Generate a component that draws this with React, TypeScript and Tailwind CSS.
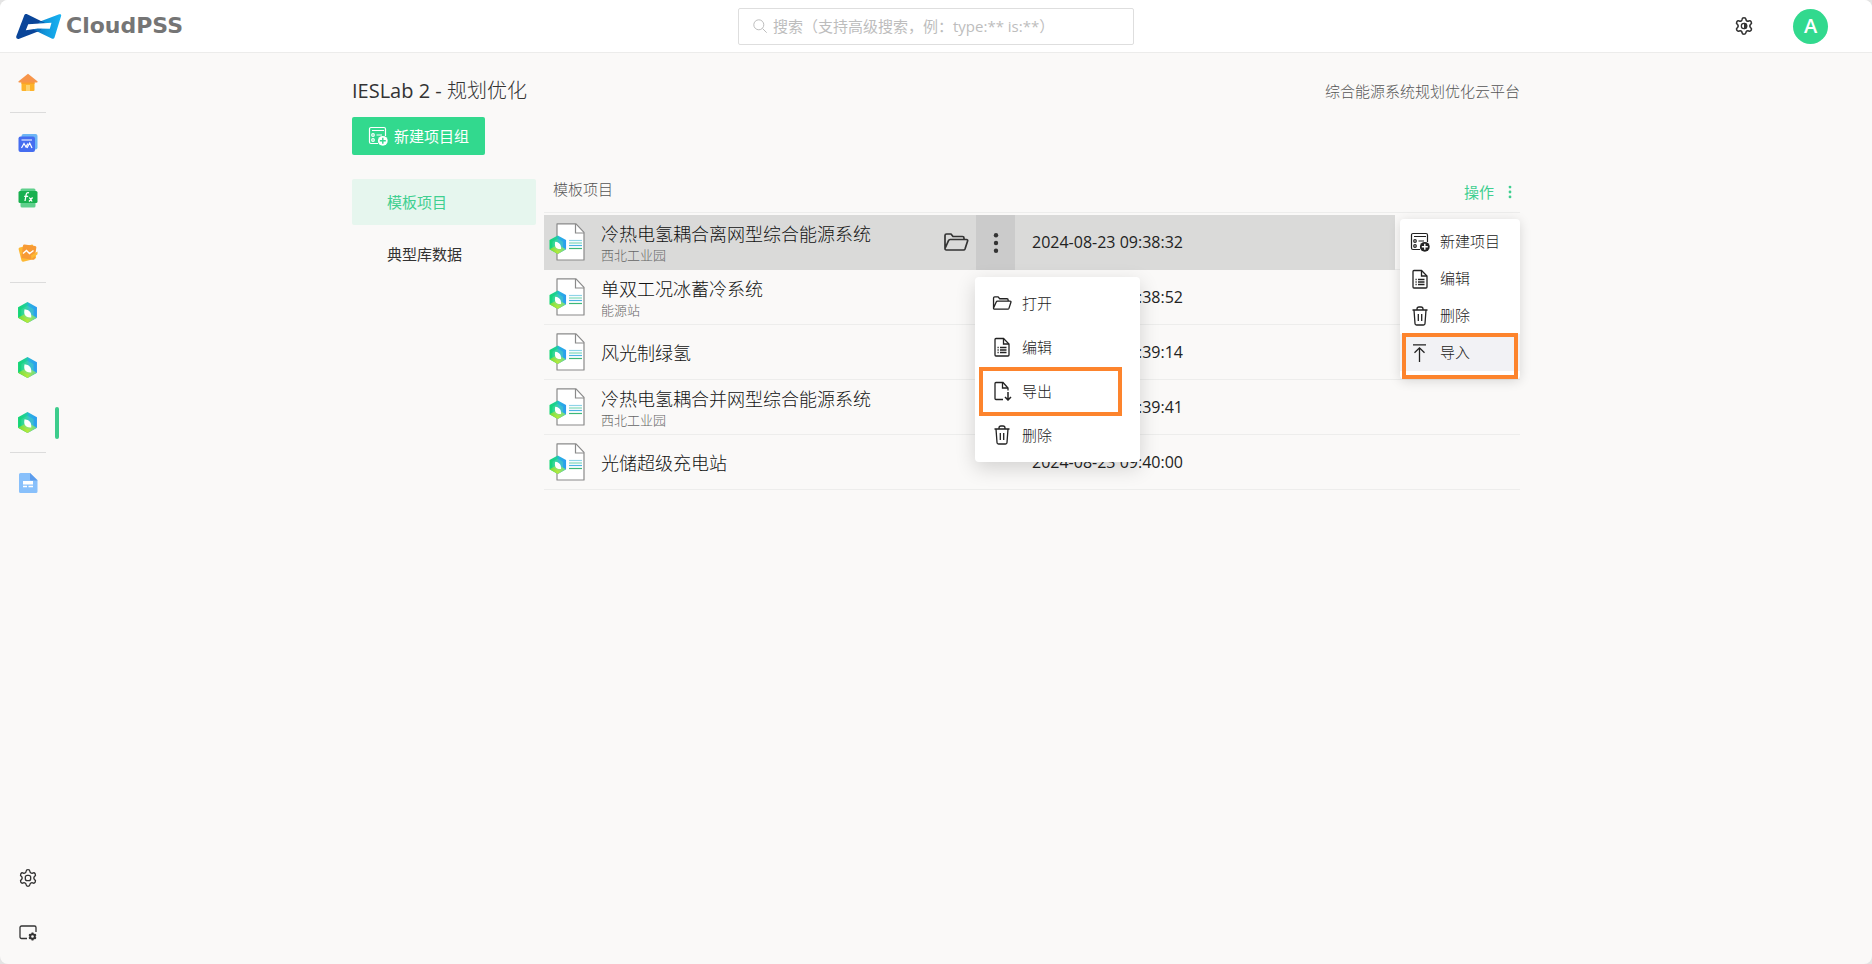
import type { ReactNode } from 'react';

const GEAR =
  'M9.671 4.136a2.34 2.34 0 0 1 4.659 0 2.34 2.34 0 0 0 3.319 1.915 2.34 2.34 0 0 1 2.33 4.033 2.34 2.34 0 0 0 0 3.831 2.34 2.34 0 0 1-2.33 4.033 2.34 2.34 0 0 0-3.319 1.915 2.34 2.34 0 0 1-4.659 0 2.34 2.34 0 0 0-3.32-1.915 2.34 2.34 0 0 1-2.33-4.033 2.34 2.34 0 0 0 0-3.831A2.34 2.34 0 0 1 6.35 6.051a2.34 2.34 0 0 0 3.319-1.915';

function GearIcon() {
  return (
    <svg className="size-5" viewBox="0 0 24 24" fill="none" stroke="currentColor" strokeWidth="1.6">
      <path d={GEAR} />
      <rect x="8.8" y="8.8" width="6.4" height="6.4" rx="2.4" />
    </svg>
  );
}

function ThemeGearIcon() {
  return (
    <svg className="size-5" viewBox="0 0 24 24" fill="none" stroke="currentColor" strokeWidth="1.9">
      <path d={GEAR} />
      <circle cx="12" cy="12" r="3.2" strokeWidth="1.5" />
      <path d="M12 8a4 4 0 0 1 0 8Z" fill="currentColor" stroke="none" />
    </svg>
  );
}

function WindowGearIcon() {
  return (
    <svg className="size-5" viewBox="0 0 20 20" fill="none" stroke="currentColor" strokeWidth="1.3">
      <path d="M9 15.5H3.5A1.5 1.5 0 0 1 2 14V4.5A1.5 1.5 0 0 1 3.500 3h13A1.500 1.500 0 0 1 18 4.500V9" />
      <circle cx="14.500" cy="13.500" r="2.300" strokeWidth="1.900" />
      <path d="M14.500 9.500v1.800M14.500 15.700v1.800M11 11.500l1.600.9M16.400 14.600l1.600.9M11 15.500l1.600-.9M16.400 12.400l1.600-.9" strokeWidth="1.900" />
    </svg>
  );
}

function HomeIcon() {
  return (
    <svg className="size-5" viewBox="0 0 20 20">
      <path d="M3.500 8h13v9a1 1 0 0 1-1 1h-11a1 1 0 0 1-1-1Z" fill="#fdb32b" />
      <path d="M3.500 8h13v3h-13Z" fill="#fba12a" />
      <path d="M8 12h4v6H8Z" fill="#fdd16e" />
      <path d="M10 .8.600 8.300c-.5.500-.2 1.200.4 1.200h18c.6 0 .9-.7.4-1.200Z" fill="#f7954a" />
    </svg>
  );
}

function ChartIcon() {
  return (
    <svg className="size-5" viewBox="0 0 20 20">
      <rect x="3.500" y="1" width="16" height="15.500" rx="2" fill="#6cb5f5" />
      <rect x=".5" y="3.500" width="16.500" height="15.500" rx="2" fill="#456df0" />
      <path d="M3.500 7h10.500" stroke="#fff" strokeWidth="1.200" />
      <path d="m3.500 15 2.500-4.500 2 3.500 1.800-3.500M9 15l2.700-5 2.300 5" fill="none" stroke="#fff" strokeWidth="1.200" />
    </svg>
  );
}

function FunctionIcon() {
  return (
    <svg className="size-5" viewBox="0 0 20 20">
      <rect x="2.500" y=".5" width="15" height="6" rx="1.500" fill="#5fd08c" />
      <rect x="2.500" y="13" width="15" height="6.500" rx="1.500" fill="#5fd08c" />
      <rect x=".5" y="3" width="19" height="12" rx="1.500" fill="#18b04f" />
      <path
        d="M11 4.800c-1.800-.7-2.600.4-2.900 2L7 13M6.200 8.300h4M11.300 9.500l2.800 4M14.600 9.500l-3.600 4"
        fill="none"
        stroke="#fff"
        strokeWidth="1.300"
      />
    </svg>
  );
}

function StatsIcon() {
  return (
    <svg className="size-5" viewBox="0 0 20 20">
      <rect x="1.800" y="3" width="15" height="14.500" rx="1.500" fill="#fdb833" transform="rotate(-14 9 10)" />
      <rect x="4" y="2" width="13.500" height="14" rx="1.500" fill="#f79a35" transform="rotate(8 10 10)" />
      <path d="M13 12.500 19.500 8.500v2.800L13.500 16Z" fill="#fdb833" />
      <path d="m5 10.500 3.500-3 3 3 4-3" fill="none" stroke="#fff" strokeWidth="1.500" />
    </svg>
  );
}

function HexShape() {
  return (
    <g>
      <path d="M9 0 18 5v10l-9 5-9-5V5Z" fill="url(#hexSide)" />
      <path d="m0 15 9-5 9 5-9 5Z" fill="url(#hexBase)" />
      <path d="m9 3.500 5.800 3.200v6.600L9 16.500l-5.800-3.200V6.700Z" fill="#5fe0a8" fillOpacity=".35" />
      <path d="M6.200 6.800c2.700.2 5.600 1.800 6.100 4.300.3 1.300.3 2.400.3 3.600-2.700.3-5.400-.6-6.300-2.800-.6-1.600-.5-3.300-.1-5.100Z" fill="#fff" />
    </g>
  );
}

function HexGradients() {
  return (
    <svg className="absolute size-0" aria-hidden="true">
      <defs>
        <linearGradient id="hexSide" x1="0" y1="0" x2="1" y2="0">
          <stop offset="0" stopColor="#12d672" />
          <stop offset=".42" stopColor="#20cf9c" />
          <stop offset=".6" stopColor="#2ab2e0" />
          <stop offset="1" stopColor="#2a9cf0" />
        </linearGradient>
        <linearGradient id="hexBase" x1="0" y1="0" x2="1" y2="0">
          <stop offset="0" stopColor="#6fdc3c" />
          <stop offset=".5" stopColor="#b4e83c" />
          <stop offset="1" stopColor="#5cd8a0" />
        </linearGradient>
      </defs>
    </svg>
  );
}

function HexIcon() {
  return (
    <svg className="h-[21px] w-[19px]" viewBox="0 0 18 20">
      <HexShape />
    </svg>
  );
}

function DocIcon() {
  return (
    <svg className="size-5" viewBox="0 0 20 20">
      <path d="M2.500 0H12l7.500 7v11.500a1.500 1.500 0 0 1-1.500 1.500H2.500A1.500 1.500 0 0 1 1 18.500v-17A1.500 1.500 0 0 1 2.500 0Z" fill="#88c0fb" />
      <path d="M12 0l7.500 7.500H13A1 1 0 0 1 12 6.500Z" fill="#5c9cec" />
      <path d="M5 8h10v3.500H5ZM5 12.700h4v1.500H5ZM10.500 12.700H15v1.500h-4.500Z" fill="#fff" />
    </svg>
  );
}

function FileIcon() {
  return (
    <svg className="h-[38px] w-9 shrink-0" viewBox="0 0 36 38" fill="none">
      <path d="M8 .9h19l8 8.500V37H8Z" fill="#fff" stroke="#8a8a8a" strokeWidth="1.200" strokeLinejoin="round" />
      <path d="M26.500 1v9H35" stroke="#8a8a8a" strokeWidth="1.200" />
      <path d="M20 17.500h13" stroke="#8fd3e8" strokeWidth="1.200" />
      <path d="M20 20h13" stroke="#7dd8b8" strokeWidth="1.200" />
      <path d="M20 22.500h13" stroke="#4fb4e6" strokeWidth="1.200" />
      <path d="M20 25.500h13" stroke="#3cb878" strokeWidth="1.200" />
      <g transform="translate(.5 12.500) scale(.92)">
        <HexShape />
      </g>
    </svg>
  );
}

function ListAddIcon({ hole }: { hole: string }) {
  return (
    <svg className="size-5" viewBox="0 0 20 20" fill="none" stroke="currentColor" strokeWidth="1.200">
      <path d="M10 17.500H3A1.500 1.500 0 0 1 1.500 16V3A1.500 1.500 0 0 1 3 1.500h13A1.500 1.500 0 0 1 17.500 3v7M4 4.500h12M8.500 9H14" />
      <circle cx="5" cy="9" r="1.300" />
      <circle cx="5" cy="14" r="1.300" />
      <circle cx="14.800" cy="14.800" r="4.900" fill="currentColor" stroke="none" />
      <path d="M14.800 11.800v6M11.800 14.800h6" className={hole} strokeWidth="1.400" />
    </svg>
  );
}

function FolderIcon({ size }: { size: string }) {
  return (
    <svg className={size} viewBox="0 0 26 20" fill="none" stroke="currentColor" strokeWidth="1.700" strokeLinejoin="round">
      <path d="M2 16.500V3.500A1.500 1.500 0 0 1 3.500 2H8l2 2.500h9.500A1.500 1.500 0 0 1 21 6v1.500M2 16.500 5.500 8.600A1.800 1.800 0 0 1 7.200 7.500h16.300c.9 0 1.400.7 1.100 1.500L22 17a1.500 1.500 0 0 1-1.400 1H3.300A1.300 1.300 0 0 1 2 16.500Z" />
    </svg>
  );
}

function EditIcon() {
  return (
    <svg className="size-5" viewBox="0 0 20 20" fill="none" stroke="currentColor" strokeWidth="1.300">
      <path d="M3 2.500A1 1 0 0 1 4 1.500h7.500L17 7v11a1 1 0 0 1-1 1H4a1 1 0 0 1-1-1Z" />
      <path d="M11.500 1.500V7H17M8 10.500h6.500M8 13h6.500M8 15.500h6.500M5.500 10.500h1.200M5.500 13h1.200M5.500 15.500h1.200" />
    </svg>
  );
}

function ExportIcon() {
  return (
    <svg className="size-5" viewBox="0 0 20 20" fill="none" stroke="currentColor" strokeWidth="1.300">
      <path d="M11 18.500H4a1 1 0 0 1-1-1v-15a1 1 0 0 1 1-1h7L16 7v2.500" />
      <path d="M10.500 1.500V7H16" />
      <path d="M16 11v8M13 16l3 3 3-3" strokeWidth="1.500" />
    </svg>
  );
}

function TrashIcon() {
  return (
    <svg className="size-5" viewBox="0 0 20 20" fill="none" stroke="currentColor" strokeWidth="1.300">
      <path d="M2.500 4h15M7 4V3a2 2 0 0 1 2-2h2a2 2 0 0 1 2 2v1M4 4l1 13.500A1.500 1.500 0 0 0 6.500 19h7a1.500 1.500 0 0 0 1.500-1.500L16 4M8.300 8v7M11.700 8v7" />
    </svg>
  );
}

function ImportIcon() {
  return (
    <svg className="size-5" viewBox="0 0 20 20" fill="none" stroke="currentColor" strokeWidth="1.300">
      <path d="M3 1.800h13M9.500 19V4.800M4.500 9.800l5-5 5 5" />
    </svg>
  );
}

function Dots({ className }: { className: string }) {
  return (
    <svg className={className} viewBox="0 0 6 22" fill="currentColor">
      <circle cx="3" cy="3.200" r="2.200" />
      <circle cx="3" cy="11" r="2.200" />
      <circle cx="3" cy="18.800" r="2.200" />
    </svg>
  );
}

function Logo() {
  return (
    <a href="#" className="flex items-center gap-1" aria-label="CloudPSS">
      <svg className="h-[25px] w-[46px]" viewBox="0 0 46 25">
        <defs>
          <linearGradient id="logoLight" x1="0" y1="0" x2="1" y2="0">
            <stop offset="0" stopColor="#0b63b4" />
            <stop offset=".5" stopColor="#1298dc" />
            <stop offset="1" stopColor="#17b4f4" />
          </linearGradient>
        </defs>
        <path d="M43.200.3c1.500-.4 2.300.4 1.900 1.700l-6.500 21.200c-.5 1.400-1.600 1.900-2.900 1.400L15 14.500 24 7.600Z" fill="url(#logoLight)" />
        <path d="M11.200.3 31 10l-9 7.500L3.300 24.700C1.300 25.400-.3 24 .3 22.200L8.200 1.600C8.800.200 10-.200 11.200.3Z" fill="#0a4599" />
        <path d="M24 7.600 31 10l-9 7.500-4.500-1.800Z" fill="#0c6fbe" />
        <path d="m12.200 10.200 23.300-1.400-1.700 6-12-.3-12 1.700Z" fill="#fff" />
      </svg>
      <span className="font-['DejaVu_Sans'] text-[22px] leading-7 font-bold text-[#757575]">CloudPSS</span>
    </a>
  );
}

function NavItem({ label, active, children }: { label: string; active?: boolean; children: ReactNode }) {
  return (
    <a href="#" aria-label={label} className="flex h-[55px] items-center">
      <span className="flex w-[55px] justify-center">{children}</span>
      {active && <span className="h-8 w-1 rounded-full bg-[#3ccc8c]" />}
    </a>
  );
}

function Divider() {
  return <div className="mx-2.5 my-0.5 h-px w-9 bg-[#dcdcdc]" />;
}

const projects = [
  { name: '冷热电氢耦合离网型综合能源系统', note: '西北工业园', date: '2024-08-23 09:38:32' },
  { name: '单双工况冰蓄冷系统', note: '能源站', date: '2024-08-23 09:38:52' },
  { name: '风光制绿氢', note: '', date: '2024-08-23 09:39:14' },
  { name: '冷热电氢耦合并网型综合能源系统', note: '西北工业园', date: '2024-08-23 09:39:41' },
  { name: '光储超级充电站', note: '', date: '2024-08-23 09:40:00' },
];

function RowMenu() {
  const item = 'flex h-11 w-full items-center gap-2.5 pl-[17px] text-left';
  return (
    <div className="absolute top-[62px] left-full z-10 -ml-10 w-[165px] rounded-sm bg-white pt-1 pb-[5px] text-[15px] font-light text-[#222] shadow-[0_6px_20px_rgba(0,0,0,0.16)]">
      <button className={item}>
        <FolderIcon size="h-4 w-5" />
        打开
      </button>
      <button className={item}>
        <EditIcon />
        编辑
      </button>
      <button className={`${item} relative`}>
        <span className="absolute -top-0.5 left-1 h-[49px] w-[143px] border-4 border-[#fd842d]" />
        <ExportIcon />
        导出
      </button>
      <button className={item}>
        <TrashIcon />
        删除
      </button>
    </div>
  );
}

function GroupMenu() {
  const item = 'flex h-[37px] w-full items-center gap-2.5 pl-2.5 text-left';
  return (
    <div className="absolute top-10 right-0 z-10 w-[120px] rounded-sm bg-white pt-1 text-[15px] font-light text-[#222] shadow-[0_2px_12px_rgba(0,0,0,0.14)]">
      <button className={item}>
        <ListAddIcon hole="stroke-white" />
        新建项目
      </button>
      <button className={item}>
        <EditIcon />
        编辑
      </button>
      <button className={item}>
        <TrashIcon />
        删除
      </button>
      <div className="relative pb-2">
        <button className={`${item} bg-[#f2f2f5]`}>
          <ImportIcon />
          导入
        </button>
        <span className="absolute inset-x-0.5 -top-px bottom-0 border-4 border-[#fd842d]" />
      </div>
    </div>
  );
}

export default function App() {
  return (
    <div className="min-h-screen bg-[#e4e4e4] font-['Open_Sans','Noto_Sans_CJK_SC',sans-serif] text-[#333]">
      <HexGradients />
      <div className="flex min-h-screen flex-col overflow-hidden rounded-lg bg-[#faf9f8]">
        <header className="grid h-[53px] grid-cols-[1fr_396px_1fr] items-center border-b border-[#ececeb] bg-white pr-11 pl-4">
          <Logo />
          <label className="ml-[14px] flex h-[37px] w-[396px] items-center gap-1.5 rounded-xs border border-[#dedede] pl-3.5 text-[#bdbdbd]">
            <svg className="size-3.5" viewBox="0 0 14 14" fill="none" stroke="currentColor" strokeWidth="1">
              <circle cx="5.800" cy="5.800" r="5" />
              <path d="m9.500 9.500 4.200 4.200" />
            </svg>
            <input
              type="search"
              aria-label="搜索"
              placeholder="搜索（支持高级搜索，例：type:** is:**）"
              className="flex-1 bg-transparent text-[15px] leading-5 outline-none placeholder:text-[#bdbdbd]"
            />
          </label>
          <div className="flex items-center justify-end gap-[39px]">
            <button aria-label="主题设置">
              <ThemeGearIcon />
            </button>
            <button className="size-[35px] rounded-full bg-[#32d98e] text-xl font-semibold text-white">A</button>
          </div>
        </header>

        <div className="flex flex-1">
          <nav className="flex w-[60px] flex-col pt-0.5 pb-1">
            <NavItem label="首页"><HomeIcon /></NavItem>
            <Divider />
            <NavItem label="SimStudio"><ChartIcon /></NavItem>
            <NavItem label="FuncStudio"><FunctionIcon /></NavItem>
            <NavItem label="AppStudio"><StatsIcon /></NavItem>
            <Divider />
            <NavItem label="IESLab 仿真"><HexIcon /></NavItem>
            <NavItem label="IESLab 评估"><HexIcon /></NavItem>
            <NavItem label="IESLab 规划优化" active><HexIcon /></NavItem>
            <Divider />
            <NavItem label="文档"><DocIcon /></NavItem>
            <div className="flex-1" />
            <NavItem label="设置"><GearIcon /></NavItem>
            <NavItem label="窗口设置"><WindowGearIcon /></NavItem>
          </nav>

          <main className="flex flex-1 justify-center pr-[60px]">
            <div className="w-full max-w-[1168px] pt-6">
              <div className="flex items-center justify-between">
                <h1 className="text-[20px] leading-7 text-[#333]">
                  IESLab 2 - <span className="font-light">规划优化</span>
                </h1>
                <p className="text-[15px] leading-7 font-light text-[#555]">综合能源系统规划优化云平台</p>
              </div>
              <button className="mt-3 flex h-[38px] items-center gap-1.5 rounded-xs bg-[#32d98e] px-4 text-[15px] text-white">
                <ListAddIcon hole="stroke-[#32d98e]" />
                新建项目组
              </button>

              <div className="mt-6 flex gap-2">
                <div className="flex w-[184px] flex-col gap-1.5 text-[15px]">
                  <button className="h-[46px] rounded-xs bg-[#e6f6ee] pl-[35px] text-left text-[#3fcf90]">模板项目</button>
                  <button className="h-[46px] rounded-xs pl-[35px] text-left">典型库数据</button>
                </div>

                <table className="flex-1 table-fixed border-separate border-spacing-0">
                  <colgroup>
                    <col className="w-[471px]" />
                    <col />
                    <col className="w-[125px]" />
                  </colgroup>
                  <thead>
                    <tr className="text-left text-[15px]">
                      <th colSpan={2} className="p-0 pb-0.5 font-light">
                        <div className="h-[34px] border-b border-[#ededec] pl-[9px] leading-[21px] text-[#555]">模板项目</div>
                      </th>
                      <th className="relative p-0 pb-0.5 font-normal">
                        <div className="flex h-[34px] justify-end border-b border-[#ededec] pr-2">
                          <button className="flex h-[26px] items-center gap-3.5 text-[#3fcf90]">
                            操作
                            <Dots className="h-3.5 w-1" />
                          </button>
                        </div>
                        <GroupMenu />
                      </th>
                    </tr>
                  </thead>
                  <tbody>
                    {projects.map((p, i) => {
                      const cell = i === 0 ? 'border-[#dadad9] bg-[#dadad9]' : 'border-[#ededec]';
                      return (
                        <tr key={p.name}>
                          <td className={`relative h-[55px] border-b p-0 ${cell}`}>
                            <div className="flex h-[54px] items-center">
                              <span className="ml-[5px]">
                                <FileIcon />
                              </span>
                              <a href="#" className="ml-4 flex-1 pt-0.5">
                                <span className="block text-[18px] leading-6 font-light text-[#111]">{p.name}</span>
                                {p.note && <span className="block text-[13px] leading-[18px] font-light text-[#666]">{p.note}</span>}
                              </a>
                              {i === 0 && (
                                <>
                                  <button aria-label="打开" className="mr-[7px]">
                                    <FolderIcon size="h-5 w-[26px]" />
                                  </button>
                                  <button aria-label="更多" className="-mb-px flex h-[55px] w-[39px] items-center justify-center bg-[#cbcbcb]">
                                    <Dots className="h-[22px] w-1.5" />
                                  </button>
                                </>
                              )}
                            </div>
                            {i === 0 && <RowMenu />}
                          </td>
                          <td className={`border-b p-0 pl-[17px] text-[16px] text-[#222] ${cell}`}>{p.date}</td>
                          <td className="border-b border-[#ededec] p-0" />
                        </tr>
                      );
                    })}
                  </tbody>
                </table>
              </div>
            </div>
          </main>
        </div>
      </div>
    </div>
  );
}
